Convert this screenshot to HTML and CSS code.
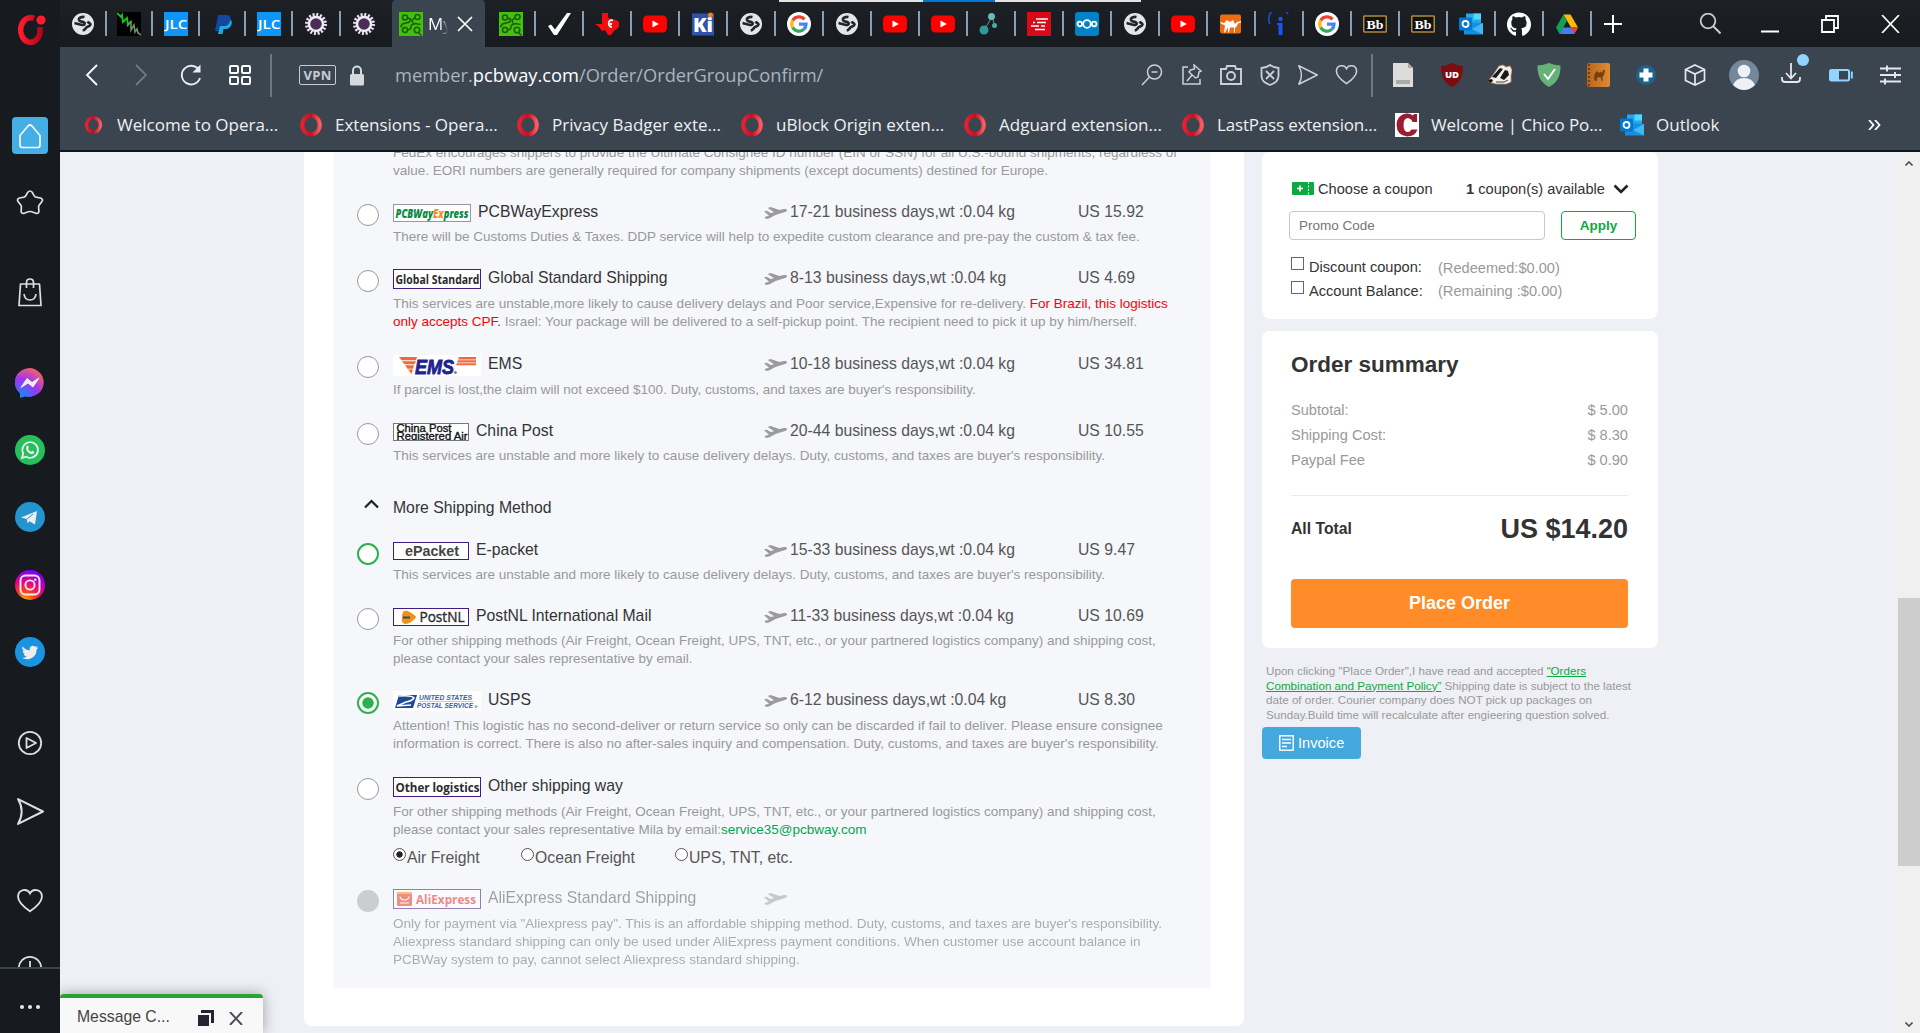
FILE: index.html
```html
<!DOCTYPE html>
<html lang="en">
<head>
<meta charset="utf-8">
<title>My Orders</title>
<link rel="stylesheet" href="styles.css">
</head>
<body>
<svg class="defs" width="0" height="0">
  <defs>
    <linearGradient id="opera" x1="0" y1="0" x2="1" y2="0"><stop offset="0" stop-color="#ff1b2d"/><stop offset="1" stop-color="#b50716"/></linearGradient>
    <linearGradient id="operaBm" x1="0" y1="0" x2="1" y2="0"><stop offset="0" stop-color="#e8202f"/><stop offset=".5" stop-color="#c01020"/><stop offset="1" stop-color="#ff5a5f"/></linearGradient>
    <radialGradient id="msg" cx=".2" cy="1" r="1.15"><stop offset="0" stop-color="#0a90ff"/><stop offset=".55" stop-color="#a033f0"/><stop offset="1" stop-color="#ff6a58"/></radialGradient>
    <radialGradient id="insta" cx=".3" cy="1.05" r="1.05"><stop offset="0" stop-color="#fb0"/><stop offset=".35" stop-color="#ff3a1f"/><stop offset=".65" stop-color="#e6008c"/><stop offset="1" stop-color="#7a00ff"/></radialGradient>
    <linearGradient id="camelBook" x1="0" y1="0" x2="1" y2="0"><stop offset="0" stop-color="#b8651b"/><stop offset="1" stop-color="#e08a34"/></linearGradient>
  </defs>
</svg>
<svg class="symbols">
  <symbol id="globe" viewBox="0 0 24 24"><circle cx="12" cy="12" r="11" fill="#e3e6ea"/><path d="M13.500 5c-3-.5-6 .8-5.500 3 .5 1.800 2.500 1.300 4.300 2 2 .9 1.500 2.300.5 2.800-2 .8-5-.8-9.300-1.800M16.500 9.500c1 1.500 3 1.500 3 3-.5 2-2.500 1.800-3.800 2.800-1.300 1-1.500 2.800-4 3.200" fill="none" stroke="#22262c" stroke-width="2.700"/></symbol>
  <symbol id="jlc" viewBox="0 0 24 24"><rect width="24" height="24" fill="#0d96f8"/><text x="1" y="17" font-family="Open Sans, sans-serif" font-size="13" font-weight="600" fill="#fff" textLength="22.500" lengthAdjust="spacingAndGlyphs">JLC</text></symbol>
  <symbol id="wave" viewBox="0 0 24 24"><rect width="24" height="24" fill="#000"/><path d="M0 1l4 4 1-2 1 7 4-4 1 7 3-4" fill="none" stroke="#0cc81a" stroke-width="1.800"/><path d="M10 14l4-4 0 8 3-5 1 7 2-3 1 4 3 2" fill="none" stroke="#6d9065" stroke-width="1.600"/></symbol>
  <symbol id="paypal" viewBox="0 0 24 24"><path d="M7 3h8c4 0 5.500 2.500 4.500 6-1 3.500-3.500 5-7 5H9.500L8.500 19H4z" fill="#1546a0"/><path d="M19.500 7.500c1.500 1.500 1.500 3 1 5-1 3.300-3.300 4.500-6 4.500h-2l-1 5H7l2-8h3.500c4 0 6-2 7-6.500z" fill="#20a8e8"/></symbol>
  <symbol id="gear" viewBox="0 0 24 24"><circle cx="12" cy="12" r="9.300" fill="#3a2148" stroke="#e8e2ee" stroke-width="3.400" stroke-dasharray="2 1.650"/><circle cx="12" cy="12" r="7" fill="#4a2e58" stroke="#f0edf3" stroke-width="2.400"/></symbol>
  <symbol id="pcb" viewBox="0 0 24 24"><rect width="24" height="24" fill="#42c209"/><g fill="none" stroke="#1f5c10" stroke-width="1.600"><circle cx="6" cy="5.500" r="2.500"/><circle cx="18.500" cy="5" r="2.500"/><circle cx="6" cy="18" r="2.500"/><circle cx="18" cy="18" r="2.700"/><path d="M8.500 6l3 1-1 3-7 2-2 3M16 5.500l-3 3 1 3M8.500 18l3-1 1-4 4-1.500 5 1M19.500 20.500l3 3"/></g></symbol>
  <symbol id="check" viewBox="0 0 24 24"><path d="M1 14l3-1.500 4 5L20 1h4L10 23H7z" fill="#fff"/></symbol>
  <symbol id="texas" viewBox="0 0 24 24"><path d="M7 1h6v5l8 2 3 2v5l-5 4-3 4h-3l-3-5-3 1-3-4-4-3h7z" fill="#f50d0d"/><path d="M18 8.500c-5-2.500-6 6.500-1 6.500M15 12h2" stroke="#fff" stroke-width="1.800" fill="none"/></symbol>
  <symbol id="yt" viewBox="0 0 24 24"><rect x="0" y="3.500" width="24" height="17" rx="4.500" fill="#f00"/><path d="M9.500 8.500v7l6.300-3.500z" fill="#fff"/></symbol>
  <symbol id="ki" viewBox="0 0 24 24"><rect x="1" y="1.500" width="22" height="22" fill="#3152ab"/><text x="2" y="20" font-family="Open Sans, sans-serif" font-size="20" font-weight="800" fill="#fff" textLength="20" lengthAdjust="spacingAndGlyphs">Ki</text><circle cx="19.500" cy="3" r="2.500" fill="#f38019"/></symbol>
  <symbol id="google" viewBox="0 0 24 24"><circle cx="12" cy="12" r="12" fill="#fff"/><g fill="none" stroke-width="3.200"><path d="M17.500 7.400A7.200 7.200 0 0 0 5.700 8.500" stroke="#ea4335"/><path d="M5.700 8.500a7.200 7.200 0 0 0 0 7" stroke="#fbbc05"/><path d="M5.700 15.500a7.200 7.200 0 0 0 10.900 2" stroke="#34a853"/><path d="M16.600 17.500c1.700-1.500 2.500-3.200 2.500-5.300H12" stroke="#4285f4"/></g></symbol>
  <symbol id="dots3" viewBox="0 0 24 24"><path d="M5 18L13 5l3 9" stroke="#4f9c99" fill="none"/><circle cx="5" cy="18" r="4.500" fill="#2f9a95"/><circle cx="12.500" cy="4.500" r="3.500" fill="#6cb9b5"/><circle cx="15.500" cy="13.500" r="2.500" fill="#4ba9a5"/></symbol>
  <symbol id="redlist" viewBox="0 0 24 24"><rect width="24" height="24" fill="#d90a18"/><path d="M9 7h12M6 10.500h2M10 10.500h9M4 14h8M14 14h4M8 17.500h10" stroke="#fff" stroke-width="1.600"/></symbol>
  <symbol id="nextcloud" viewBox="0 0 24 24"><rect width="24" height="24" rx="3" fill="#0082c9"/><g fill="none" stroke="#fff" stroke-width="1.800"><circle cx="12" cy="12" r="3.800"/><circle cx="4.800" cy="12" r="2.300"/><circle cx="19.200" cy="12" r="2.300"/></g></symbol>
  <symbol id="camel" viewBox="0 0 24 24"><rect x="1" y="2.500" width="21" height="19" rx="2" fill="#ee6c11"/><path d="M1 10l4 1 3-3 3 2 3-2 2 4 2-2 4-1v1.500l-3 1-2 4h-1v5h-1v-5l-4 0-1 5H9l0-5-3 5H5l1-7-4-2z" fill="#fff"/></symbol>
  <symbol id="info" viewBox="0 0 24 24"><path d="M3 12A10 10 0 0 1 21 2" fill="none" stroke="#1a4fe0" stroke-width="1.500"/><circle cx="13.500" cy="7" r="2.200" fill="#1a55f0"/><path d="M10 11h5.500v12h-4V13H10z" fill="#1a55f0"/></symbol>
  <symbol id="bb" viewBox="0 0 24 24"><rect x=".7" y="4" width="22.600" height="16" rx="1" fill="#111" stroke="#b08a3a" stroke-width="1.600"/><text x="3.500" y="16.500" font-family="Liberation Serif, serif" font-size="13" font-weight="700" fill="#fff" textLength="17" lengthAdjust="spacingAndGlyphs">Bb</text></symbol>
  <symbol id="outlook" viewBox="0 0 24 24"><rect x="7" y="1.500" width="15" height="12" fill="#28a8ea"/><rect x="14.500" y="1.500" width="7.500" height="6" fill="#50d9ff"/><path d="M5 10l19 1v11.500H5z" fill="#1490df"/><path d="M24 11v11.500L13 17z" fill="#42b9f2"/><rect x="0" y="5.500" width="13" height="13" rx="1" fill="#0078d4"/><circle cx="6.500" cy="12" r="3" fill="none" stroke="#fff" stroke-width="1.800"/></symbol>
  <symbol id="github" viewBox="0 0 24 24"><path fill="#fff" d="M12 .5C5.400.5 0 5.800 0 12.500c0 5.200 3.400 9.600 8 11.200.8 0 1-.5 1-1v-3c-3.500.7-4.200-1.500-4.200-1.500-.6-1.300-1.300-1.700-1.300-1.700-1-.7.1-.7.1-.7 1.200.1 1.900 1.200 1.900 1.200 1 1.800 2.800 1.300 3.500 1 .1-.8.400-1.300.8-1.600-3.500-.4-5.500-1.500-5.500-5.900 0-1.300.5-2.300 1.200-3.200-.1-.3-.5-1.500.1-3.100 0 0 1-.3 3.300 1.200a11.500 11.500 0 0 1 6 0C17.200 3.900 18.200 4.200 18.200 4.200c.7 1.600.3 2.800.2 3.100.7.900 1.200 1.900 1.200 3.200 0 4.400-2 5.500-5.500 5.900.5.400.9 1.200.9 2.300v4c0 .5.200 1 1 1 4.600-1.600 8-6 8-11.200C24 5.800 18.600.5 12 .5z"/></symbol>
  <symbol id="drive" viewBox="0 0 24 24"><path d="M8.500 2.500L1 15.500l3.500 6.500L12 9z" fill="#12a152"/><path d="M8.500 2.500h7L23 15.500h-7z" fill="#fbb90a"/><path d="M8 15.500h15l-3.800 6.500H4.500z" fill="#4280ee"/><path d="M16 15.500h7L19.200 22z" fill="#ea3f32"/></symbol>
  <symbol id="operaO" viewBox="0 0 24 24"><ellipse cx="12" cy="12" rx="8.700" ry="9.300" fill="none" stroke="url(#operaBm)" stroke-width="4.200"/></symbol>
  <symbol id="heart" viewBox="0 0 24 24"><path d="M12 21.500C7 18 1 13.500 1 8c0-7 8.500-8 11-3 2.500-5 11-4 11 3 0 5.500-6 10-11 13.500z" fill="none" stroke="currentColor" stroke-width="1.700"/></symbol>
  <symbol id="send" viewBox="0 0 26 26"><path d="M1 1l24 12L1 25q7-12 0-24z" fill="none" stroke="currentColor" stroke-width="1.900" stroke-linejoin="round"/></symbol>
  <symbol id="plane" viewBox="0 0 23 12"><path d="M0 4.200l2.600-.4 4 2.200 3.500-.8L3.700 1 6.500 0l9 3 4.500-1c2-.4 3 .2 3 1.300 0 .9-.8 1.400-2 1.800l-9.500 3L5.500 11.200l-3.500.9-1.500-2 4.500-1.300z" fill="#9b9b9b"/></symbol>
</svg>

<div class="browser">
  <aside class="sidebar">
    <svg class="s-logo" width="32" height="32" viewBox="0 0 32 32"><path d="M20 4.500A9.800 12.300 0 1 0 26 19V13" fill="none" stroke="url(#opera)" stroke-width="5.500"/><circle cx="27" cy="6" r="4.600" fill="#ff1b2d"/></svg>
    <div class="s-home"><svg width="24" height="26" viewBox="0 0 24 26"><path d="M2 12.500L10 3q2-2 4 0l8 9.500V22q0 2.500-2.500 2.500h-15Q2 24.500 2 22z" fill="none" stroke="#f2f8fc" stroke-width="1.700"/></svg></div>
    <svg class="s-star" width="28" height="28" viewBox="0 0 28 28"><path d="M11.800 3.300q2.200-2.600 4.400 0l2 3.500q.6 1 1.800 1.300l4.500.9q2.900.9 1.600 3.300l-3 3.900q-.6.900-.5 1.900l.3 4.200q-.3 2.600-3 2l-4.200-1.500q-1.700-.6-3.400 0L8.100 24.300q-2.700.6-3-2l.3-4.200q.1-1-.5-1.900l-3-3.900Q.6 9.900 3.500 9L8 8.100q1.200-.3 1.800-1.300z" fill="none" stroke="currentColor" stroke-width="1.700"/></svg>
    <svg class="s-bag" width="28" height="30" viewBox="0 0 28 30"><path d="M4.500 7h19l1.500 21.500H3zM10.500 11V5.500q0-3.500 3.500-3.500t3.500 3.500V11M8 17q.8 6 6 6t6-6" fill="none" stroke="currentColor" stroke-width="1.700" stroke-linejoin="round"/></svg>
    <svg class="s-msg" width="30" height="30" viewBox="0 0 30 30"><path d="M15 0a15 14.500 0 1 1-5 28.500L5 30V25.500A15 14.500 0 0 1 15 0z" fill="url(#msg)"/><path d="M6 19.500l6-9 5 4 7-4.500-6 9-5-4z" fill="#eee" stroke="#eee"/></svg>
    <svg class="s-wa" width="30" height="30" viewBox="0 0 30 30"><circle cx="15" cy="15" r="15" fill="#25c05c"/><path d="M7 23l1.200-4.500a7.800 7.800 0 1 1 3 3.200z" fill="none" stroke="#eee" stroke-width="1.700"/><path d="M11.500 11q1-1 1.800.2l.6 1.700-.8 1.200q1 2 3 2.700l1.200-1 1.900 1q.5 1.500-1.600 2.200c-3 .5-7-3.500-6.500-6.300z" fill="#eee"/></svg>
    <svg class="s-tg" width="30" height="30" viewBox="0 0 30 30"><circle cx="15" cy="15" r="15" fill="#2394cd"/><path d="M6 15.500L22 9l-2 13.500-5.500-3.300-2 2-.7-4.200z" fill="#eee"/><path d="M12 17l6-5" stroke="#2394cd"/></svg>
    <svg class="s-ig" width="30" height="30" viewBox="0 0 30 30"><circle cx="15" cy="15" r="15" fill="url(#insta)"/><g fill="none" stroke="#eee" stroke-width="1.900"><rect x="5.500" y="5.500" width="19" height="19" rx="5"/><circle cx="15" cy="15" r="4.600"/></g><circle cx="20.300" cy="9.700" r="1.200" fill="#eee"/></svg>
    <svg class="s-tw" width="30" height="30" viewBox="0 0 30 30"><circle cx="15" cy="15" r="15" fill="#1c93e0"/><path d="M7.500 9.500q3 3.600 7.300 3.700-.6-4 2.800-4.400 1.500 0 2.600 1l2.300-.6-1 1.700 2-.3-1.900 2c.2 6-4.600 9.800-9.600 9.600Q9 22.100 7 20.700q3 .2 4.700-1.300-2.400-.3-3.100-2.400h1.500q-2.500-1-2.500-3.500l1.500.4Q6.500 12 7.500 9.500z" fill="#eee"/></svg>
    <svg class="s-play" width="26" height="26" viewBox="0 0 26 26"><g fill="none" stroke="currentColor" stroke-width="1.800"><circle cx="13" cy="13" r="11.200"/><path d="M9.500 8v10l9.500-5z" stroke-linejoin="round"/></g></svg>
    <svg class="s-send" width="27" height="27"><use href="#send"/></svg>
    <svg class="s-heart" width="26" height="26"><use href="#heart"/></svg>
    <svg class="s-clock" width="26" height="12" viewBox="0 0 26 12"><circle cx="13" cy="13" r="11.200" fill="none" stroke="currentColor" stroke-width="1.800"/><path d="M13 6v7" stroke="currentColor" stroke-width="1.800"/></svg>
    <div class="s-more"><i></i><i></i><i></i></div>
  </aside>

  <div class="main">
    <header class="tabs">
      <div class="progress"><i></i></div>
      <div class="tab narrow"><svg><use href="#globe"/></svg></div><div class="tab narrow"><svg><use href="#wave"/></svg></div><div class="tab narrow"><svg><use href="#jlc"/></svg></div><div class="tab narrow"><svg><use href="#paypal"/></svg></div><div class="tab narrow"><svg><use href="#jlc"/></svg></div><div class="tab"><svg><use href="#gear"/></svg></div><div class="tab last"><svg><use href="#gear"/></svg></div>
      <div class="tab-active"><svg width="24" height="24"><use href="#pcb"/></svg><span class="tab-title">My</span><svg class="tab-x" width="16" height="16" viewBox="0 0 16 16"><path d="M1 1l14 14M15 1L1 15" stroke="#fff" stroke-width="1.700"/></svg></div>
      <div class="tab"><svg><use href="#pcb"/></svg></div><div class="tab"><svg><use href="#check"/></svg></div><div class="tab"><svg><use href="#texas"/></svg></div><div class="tab"><svg><use href="#yt"/></svg></div><div class="tab"><svg><use href="#ki"/></svg></div><div class="tab"><svg><use href="#globe"/></svg></div><div class="tab"><svg><use href="#google"/></svg></div><div class="tab"><svg><use href="#globe"/></svg></div><div class="tab"><svg><use href="#yt"/></svg></div><div class="tab"><svg><use href="#yt"/></svg></div><div class="tab"><svg><use href="#dots3"/></svg></div><div class="tab"><svg><use href="#redlist"/></svg></div><div class="tab"><svg><use href="#nextcloud"/></svg></div><div class="tab"><svg><use href="#globe"/></svg></div><div class="tab"><svg><use href="#yt"/></svg></div><div class="tab"><svg><use href="#camel"/></svg></div><div class="tab"><svg><use href="#info"/></svg></div><div class="tab"><svg><use href="#google"/></svg></div><div class="tab"><svg><use href="#bb"/></svg></div><div class="tab"><svg><use href="#bb"/></svg></div><div class="tab"><svg><use href="#outlook"/></svg></div><div class="tab"><svg><use href="#github"/></svg></div><div class="tab"><svg><use href="#drive"/></svg></div>
      <svg class="plus" width="18" height="18" viewBox="0 0 18 18"><path d="M9 0v18M0 9h18" stroke="#fff" stroke-width="2"/></svg>
      <div class="win">
        <svg width="22" height="22" viewBox="0 0 22 22"><circle cx="9" cy="8" r="7.300" fill="none" stroke="#c9cdd2" stroke-width="1.800"/><path d="M14 13l7.500 7.500" stroke="#c9cdd2" stroke-width="2"/></svg>
        <svg width="18" height="22" viewBox="0 0 18 22"><path d="M0 18.500h18" stroke="#fff" stroke-width="2"/></svg>
        <svg width="18" height="18" viewBox="0 0 18 18"><path d="M1 5h12v12H1zM5 5V1h12v12h-4" fill="none" stroke="#fff" stroke-width="1.800"/></svg>
        <svg width="19" height="18" viewBox="0 0 19 18"><path d="M1 0l17 18M18 0L1 18" stroke="#fff" stroke-width="1.700"/></svg>
      </div>
    </header>

    <div class="toolbar">
      <svg class="t-back" width="14" height="22" viewBox="0 0 14 22"><path d="M12 1L2 11l10 10" fill="none" stroke="#fff" stroke-width="1.800"/></svg>
      <svg class="t-fwd" width="14" height="22" viewBox="0 0 14 22"><path d="M2 1l10 10L2 21" fill="none" stroke="#6f7985" stroke-width="1.800"/></svg>
      <svg class="t-reload" width="22" height="22" viewBox="0 0 22 22"><path d="M19.500 7A9.300 9.300 0 1 0 20 14" fill="none" stroke="#e9ecef" stroke-width="1.900"/><path d="M20.500.5v8h-8z" fill="#e9ecef"/></svg>
      <svg class="t-grid" width="22" height="20" viewBox="0 0 22 20"><g fill="none" stroke="#fff" stroke-width="1.900"><rect x="1" y="1" width="8" height="7" rx="1"/><rect x="13" y="1" width="8" height="7" rx="1"/><rect x="1" y="12" width="8" height="7" rx="1"/><rect x="13" y="12" width="8" height="7" rx="1"/></g></svg>
      <i class="t-div"></i>
      <span class="vpn">VPN</span>
      <svg class="lock" width="16" height="21" viewBox="0 0 16 21"><rect x="1" y="9" width="14" height="11.500" rx="1.500" fill="#d5d9dd"/><path d="M4 9V5.500a4 4 0 0 1 8 0V9" fill="none" stroke="#d5d9dd" stroke-width="2"/></svg>
      <span class="url">member.<b>pcbway.com</b>/Order/OrderGroupConfirm/</span>
      <div class="addr">
        <svg width="22" height="22" viewBox="0 0 22 22"><g fill="none" stroke="#ccd1d6" stroke-width="1.500"><circle cx="13.500" cy="8" r="7"/><path d="M8.500 13L1 21M10.500 8h6"/></g></svg>
        <svg width="22" height="22" viewBox="0 0 22 22"><path d="M7 3H2v17h17v-5M13 1l7 6-2 1-1 5-2.500 1L8 8l1.500-2 4-1zM11 11l-5 6" fill="none" stroke="#ccd1d6" stroke-width="1.500"/></svg>
        <svg width="22" height="22" viewBox="0 0 22 22"><g fill="none" stroke="#ccd1d6" stroke-width="1.900"><path d="M1 5h5l1-3h8l1 3h5v15H1z"/><circle cx="11" cy="12" r="4"/></g></svg>
        <svg width="20" height="22" viewBox="0 0 20 22"><path d="M10 1q4 3 8.500 3v8q0 6-8.500 9Q1.500 18 1.500 12V4Q6 4 10 1z" fill="none" stroke="#ccd1d6" stroke-width="1.800"/><path d="M6 7l8 8M14 7l-8 8" stroke="#ccd1d6" stroke-width="1.800"/></svg>
        <svg class="dim" width="20" height="20"><use href="#send"/></svg>
        <svg class="dim" width="23" height="22"><use href="#heart"/></svg>
      </div>
      <i class="t-div"></i>
      <div class="exts">
        <svg viewBox="0 0 24 24"><path d="M2 0h15l5 5v19H2z" fill="#dcdcda"/><path d="M17 0v5h5z" fill="#aaa"/><rect x="5" y="17" width="14" height="4" fill="#a9a9a9"/></svg>
        <svg viewBox="0 0 24 24"><path d="M12 0q5 3 11 3 0 16-11 21Q1 19 1 3q6 0 11-3z" fill="#800b0f"/><text x="5" y="14.500" font-family="Open Sans, sans-serif" font-size="9.500" font-weight="800" fill="#fff" textLength="14">UD</text></svg>
        <svg viewBox="0 0 24 24"><path d="M1 17l4-5 6-9 4-1 3 2 4-1 2 4-1 5v7l-5 2H8l-7-2z" fill="#f2efec" stroke="#c98a52" stroke-width=".8"/><path d="M4 14l8-9 3 1-7 9zM12 15l5-8 3 1 1 4-5 5z" fill="#191919"/><path d="M0 17l4-1 1 2-3 2z" fill="#111"/><path d="M8 19h8l4-2" stroke="#444" fill="none"/></svg>
        <svg viewBox="0 0 24 24"><path d="M12 0q5 2 11.500 2.500Q24 18 12 24 0 18 .5 2.500 7 2 12 0z" fill="#67b279"/><path d="M7 11l4 5 7-10" fill="none" stroke="#fff" stroke-width="1.900"/></svg>
        <svg viewBox="0 0 24 24"><rect x="1" width="23" height="24" rx="2" fill="url(#camelBook)"/><path d="M3 1v22" stroke="#5d3009" stroke-width="1.500" stroke-dasharray="2 2"/><path d="M8 16l.5-5 2.500-3 2 2 1.500-1.500L16 10l1-3h2l-1 5-1.500 2v4h-1l-1-4-3 .5-1 3.500H9z" fill="#75400f"/></svg>
        <svg viewBox="0 0 24 24"><circle cx="12" cy="12" r="10" fill="#1c648c"/><path d="M9.500 5.500h5v4h4v5h-4v4h-5v-4h-4v-5h4z" fill="#fff"/></svg>
        <svg viewBox="0 0 24 24"><path d="M12 2l9.500 4.500v11L12 22l-9.500-4.500v-11zM2.500 6.500L12 11l9.500-4.500M12 11v11" fill="none" stroke="#e5e8eb" stroke-width="1.700"/></svg>
        <svg class="avatar" viewBox="0 0 30 30"><circle cx="15" cy="15" r="15" fill="#74889c"/><circle cx="15" cy="11" r="6.300" fill="#eef2f6"/><path d="M4 25q3-7 11-7t11 7q-5 5-11 5T4 25z" fill="#eef2f6"/></svg>
        <svg class="dl" viewBox="0 0 24 34"><path d="M10 10v15M5 20l5 5.500 5-5.500M1 24v2q0 3 3 3h12q3 0 3-3v-2" fill="none" stroke="#e5e8eb" stroke-width="1.800"/><circle cx="22" cy="7" r="6" fill="#90d5ff"/></svg>
        <svg viewBox="0 0 24 24"><rect x="1" y="7" width="19" height="10.500" rx="1.500" fill="none" stroke="#90d5ff" stroke-width="2"/><rect x="2" y="8" width="8" height="9" fill="#90d5ff"/><path d="M22.800 8.500v7" stroke="#90d5ff" stroke-width="2"/></svg>
        <svg viewBox="0 0 24 24"><path d="M2 5.500h21M2 12h21M2 18.500h21" stroke="#e5e8eb" stroke-width="1.900"/><path d="M9 2.500v6M17 9v6M7 15.500v6" stroke="#e5e8eb" stroke-width="1.900"/></svg>
      </div>
    </div>

    <nav class="bookmarks">
      <span class="b b1"><svg><use href="#operaO"/></svg>Welcome to Opera...</span>
      <span class="b b2"><svg><use href="#operaO"/></svg>Extensions - Opera...</span>
      <span class="b b3"><svg><use href="#operaO"/></svg>Privacy Badger exte...</span>
      <span class="b b4"><svg><use href="#operaO"/></svg>uBlock Origin exten...</span>
      <span class="b b5"><svg><use href="#operaO"/></svg>Adguard extension...</span>
      <span class="b b6"><svg><use href="#operaO"/></svg>LastPass extension...</span>
      <span class="b b7"><svg viewBox="0 0 24 24"><rect width="24" height="24" fill="#fff"/><path d="M22 9V1h-3l-1 1.500Q15 0 11 .5 2 2 1.500 12 2 22.500 12 23.500q8 0 10.500-7h-6q-1.500 2.500-4 2.500-4-.5-4-7 0-6.500 4-7 4 .5 5 4z" fill="#9b1b30"/></svg>Welcome | Chico Po...</span>
      <span class="b b8"><svg><use href="#outlook"/></svg>Outlook</span>
      <svg class="more" width="13" height="10" viewBox="0 0 13 10"><path d="M1 0l4.500 5L1 10M7 0l4.500 5L7 10" fill="none" stroke="#fff" stroke-width="1.800"/></svg>
    </nav>

    <div class="viewport">
      <main class="card">
        <section class="panel">
          <p class="desc first">FedEx encourages shippers to provide the Ultimate Consignee ID number (EIN or SSN) for all U.S.-bound shipments, regardless of<br>value. EORI numbers are generally required for company shipments (except documents) destined for Europe.</p>

          <div class="ship">
            <i class="radio"></i>
            <div class="head"><span class="logo l-pcb"><svg width="76" height="16"><text x="1.500" y="12.500" textLength="73" lengthAdjust="spacingAndGlyphs">PCBWay<tspan class="or">Ex</tspan>press</text></svg></span><span class="name">PCBWayExpress</span></div>
            <span class="days"><svg><use href="#plane"/></svg>17-21 business days,wt :0.04 kg</span><span class="price">US 15.92</span>
            <p class="desc">There will be Customs Duties &amp; Taxes. DDP service will help to expedite custom clearance and pre-pay the custom &amp; tax fee.</p>
          </div>
          <div class="ship tall">
            <i class="radio"></i>
            <div class="head"><span class="logo wide"><svg width="86" height="18"><text x="1.500" y="13.500" textLength="84" lengthAdjust="spacingAndGlyphs">Global Standard</text></svg></span><span class="name">Global Standard Shipping</span></div>
            <span class="days"><svg><use href="#plane"/></svg>8-13 business days,wt :0.04 kg</span><span class="price">US 4.69</span>
            <p class="desc">This services are unstable,more likely to cause delivery delays and Poor service,Expensive for re-delivery. <em>For Brazil, this logistics</em><br><em>only accepts CPF.</em> Israel: Your package will be delivered to a self-pickup point. The recipient need to pick it up by him/herself.</p>
          </div>
          <div class="ship tall">
            <i class="radio"></i>
            <div class="head"><span class="logo plain"><svg width="88" height="21"><path d="M6 2h18l-1 3.200H8.500zM9 6.200h14l-1.500 3H11.500zM12 10.200h9l-1 3.500h-5.500zM15 14.500h5L18.500 19z" fill="#ee6a3c"/><path d="M66 2h17v2.600H65zM65 5.300h18v2.200H64zM64 8.300h19v1.900H63z" fill="#ee6a3c"/><text x="22" y="18.500" class="ems" textLength="39" lengthAdjust="spacingAndGlyphs">EMS</text><circle cx="62.500" cy="17.500" r="1.300" fill="#667"/></svg></span><span class="name">EMS</span></div>
            <span class="days"><svg><use href="#plane"/></svg>10-18 business days,wt :0.04 kg</span><span class="price">US 34.81</span>
            <p class="desc">If parcel is lost,the claim will not exceed $100. Duty, customs, and taxes are buyer's responsibility.</p>
          </div>
          <div class="ship">
            <i class="radio"></i>
            <div class="head"><span class="logo l-china"><svg width="74" height="16"><text x="2.500" y="8" textLength="55" lengthAdjust="spacingAndGlyphs">China Post</text><text x="2.500" y="16" textLength="71" lengthAdjust="spacingAndGlyphs">Registered Air</text></svg></span><span class="name">China Post</span></div>
            <span class="days"><svg><use href="#plane"/></svg>20-44 business days,wt :0.04 kg</span><span class="price">US 10.55</span>
            <p class="desc">This services are unstable and more likely to cause delivery delays. Duty, customs, and taxes are buyer's responsibility.</p>
          </div>

          <div class="more-row"><svg width="15" height="10" viewBox="0 0 15 10"><path d="M1 8.500L7.500 2 14 8.500" fill="none" stroke="#222" stroke-width="2.200"/></svg><span>More Shipping Method</span></div>

          <div class="ship">
            <i class="radio hover"></i>
            <div class="head"><span class="logo l-ep"><svg width="74" height="16"><text x="11" y="13" textLength="54" lengthAdjust="spacingAndGlyphs">ePacket</text></svg></span><span class="name">E-packet</span></div>
            <span class="days"><svg><use href="#plane"/></svg>15-33 business days,wt :0.04 kg</span><span class="price">US 9.47</span>
            <p class="desc">This services are unstable and more likely to cause delivery delays. Duty, customs, and taxes are buyer's responsibility.</p>
          </div>
          <div class="ship">
            <i class="radio"></i>
            <div class="head"><span class="logo l-nl"><svg width="74" height="16"><path d="M10 2q4-1.500 12 5.500 0 2-2 3-5 4.500-9 4.500-4-1-3-6.500 0-5 2-6.500z" fill="#f29111"/><path d="M9 8.500h7" stroke="#26468f" stroke-width="2"/><text x="25.500" y="13" textLength="45" lengthAdjust="spacingAndGlyphs">PostNL</text></svg></span><span class="name">PostNL International Mail</span></div>
            <span class="days"><svg><use href="#plane"/></svg>11-33 business days,wt :0.04 kg</span><span class="price">US 10.69</span>
            <p class="desc">For other shipping methods (Air Freight, Ocean Freight, UPS, TNT, etc., or your partnered logistics company) and shipping cost,<br>please contact your sales representative by email.</p>
          </div>
          <div class="ship tall">
            <i class="radio on"></i>
            <div class="head"><span class="logo plain"><svg width="88" height="20"><path d="M6 4h18l-4 13H2z" fill="#1c4a95"/><path d="M6 5q13-1 15 2-2 3-8 4L4 15l14-1" fill="none" stroke="#fff" stroke-width="1.500"/><text x="26" y="9" class="usps" textLength="53" lengthAdjust="spacingAndGlyphs">UNITED STATES</text><text x="24" y="17" class="usps" textLength="56" lengthAdjust="spacingAndGlyphs">POSTAL SERVICE</text><path d="M26 10.500h54" stroke="#e9aab0" stroke-width=".8"/><circle cx="83" cy="15.500" r="1.500" fill="#9db0d4"/></svg></span><span class="name">USPS</span></div>
            <span class="days"><svg><use href="#plane"/></svg>6-12 business days,wt :0.04 kg</span><span class="price">US 8.30</span>
            <p class="desc">Attention! This logistic has no second-deliver or return service so only can be discarded if fail to deliver. Please ensure consignee<br>information is correct. There is also no after-sales inquiry and compensation. Duty, customs, and taxes are buyer's responsibility.</p>
          </div>
          <div class="ship tall">
            <i class="radio"></i>
            <div class="head"><span class="logo wide"><svg width="86" height="18"><text x="1.500" y="13.500" textLength="84" lengthAdjust="spacingAndGlyphs">Other logistics</text></svg></span><span class="name">Other shipping way</span></div>
            <p class="desc">For other shipping methods (Air Freight, Ocean Freight, UPS, TNT, etc., or your partnered logistics company) and shipping cost,<br>please contact your sales representative Mila by email:<a>service35@pcbway.com</a></p>
            <div class="freight"><span class="f1"><i class="mini on"></i>Air Freight</span><span class="f2"><i class="mini"></i>Ocean Freight</span><span><i class="mini"></i>UPS, TNT, etc.</span></div>
          </div>
          <div class="ship tall off">
            <i class="radio grey"></i>
            <div class="head"><span class="logo wide l-ali"><svg width="86" height="18"><rect x="3" y="2" width="15" height="14" rx="1" fill="#e73c1e"/><path d="M3 4V3q0-1 1-1h13q1 0 1 1v1z" fill="#f7941d"/><path d="M6 6.500q.5 3.500 4.500 3.500T15 6.500M6 13h9" fill="none" stroke="#fff" stroke-width="1.200"/><text x="22" y="13.500" textLength="60" lengthAdjust="spacingAndGlyphs">AliExpress</text></svg></span><span class="name">AliExpress Standard Shipping</span></div>
            <span class="days"><svg><use href="#plane"/></svg></span>
            <p class="desc">Only for payment via "Aliexpress pay". This is an affordable shipping method. Duty, customs, and taxes are buyer's responsibility.<br>Aliexpress standard shipping can only be used under AliExpress payment conditions. When customer use account balance in<br>PCBWay system to pay, cannot select Aliexpress standard shipping.</p>
          </div>
        </section>
      </main>

      <aside class="side">
        <section class="coupon">
          <div class="c-row"><svg width="22" height="13" viewBox="0 0 22 13"><rect width="22" height="13" rx="1" fill="#0caa41"/><path d="M5 6.500h6M8 3.500v6" stroke="#fff" stroke-width="1.600"/><path d="M16.500 0v13" stroke="#fff" stroke-dasharray="2 1.500"/></svg><span class="c-label">Choose a coupon</span><span><b>1</b> coupon(s) available</span><svg class="c-down" width="16" height="10" viewBox="0 0 16 10"><path d="M1.500 1.500L8 8l6.500-6.500" fill="none" stroke="#222" stroke-width="2.600"/></svg></div>
          <div class="p-row"><div class="promo">Promo Code</div><div class="apply">Apply</div></div>
          <div class="k-row"><i class="box"></i><span class="k">Discount coupon:</span><span class="v low">(Redeemed:$0.00)</span></div>
          <div class="k-row"><i class="box"></i><span class="k">Account Balance:</span><span class="v">(Remaining :$0.00)</span></div>
        </section>
        <section class="summary">
          <h2>Order summary</h2>
          <div class="line"><span>Subtotal:</span><span>$ 5.00</span></div>
          <div class="line"><span>Shipping Cost:</span><span>$ 8.30</span></div>
          <div class="line"><span>Paypal Fee</span><span>$ 0.90</span></div>
          <div class="total"><span>All Total</span><strong>US $14.20</strong></div>
          <div class="place">Place Order</div>
        </section>
        <p class="terms">Upon clicking "Place Order",I have read and accepted <a>“Orders<br>Combination and Payment Policy”</a> Shipping date is subject to the latest<br>date of order. Courier company does NOT pick up packages on<br>Sunday.Build time will recalculate after engieering question solved.</p>
        <div class="invoice"><svg width="15" height="16" viewBox="0 0 15 16"><rect x=".8" y=".8" width="13.400" height="14.400" fill="none" stroke="#fff" stroke-width="1.400"/><path d="M3 4.500h9M3 8h9M3 11.500h5" stroke="#fff" stroke-width="1.400"/></svg>Invoice</div>
      </aside>

      <div class="scroll"><svg width="8" height="5" viewBox="0 0 8 5"><path d="M.5 4.500L4 1l3.500 3.500" fill="none" stroke="#505050" stroke-width="1.600"/></svg><i></i><svg width="8" height="5" viewBox="0 0 8 5"><path d="M.5.5L4 4 7.500.5" fill="none" stroke="#505050" stroke-width="1.600"/></svg></div>

      <div class="chat"><span>Message C...</span><svg width="16" height="16" viewBox="0 0 16 16"><path d="M0 5h11v11H0z" fill="#252434"/><path d="M3 1.500h11.500V13" fill="none" stroke="#252434" stroke-width="3"/></svg><svg width="14" height="13" viewBox="0 0 14 13"><path d="M1 0l12 13M13 0L1 13" stroke="#4b4b58" stroke-width="1.900"/></svg></div>
    </div>
  </div>
</div>
</body>
</html>
```

FILE: styles.css
```css
* { box-sizing: border-box; }
body { margin: 0; overflow: hidden; font-family: "Liberation Sans", Arial, sans-serif; }
p, h2 { margin: 0; }
i, em { font-style: normal; }
svg { display: block; flex: none; }
.defs { position: absolute; }
.symbols { display: none; }

.browser { display: flex; width: 1920px; height: 1033px; background: #171a1f; }
.main { display: flex; flex-direction: column; width: 1860px; }

/* Sidebar */
.sidebar { display: flex; flex-direction: column; align-items: center; width: 60px; flex: none; color: #dbe0e6; }
.s-logo { margin-top: 14px; }
.s-home { display: flex; align-items: center; justify-content: center; width: 36px; height: 37px; margin-top: 71px; border-radius: 4px; background: #45aee5; }
.s-star { margin-top: 35px; }
.s-bag { margin-top: 60px; }
.s-msg { margin-top: 61px; }
.s-wa { margin-top: 37px; }
.s-tg, .s-tw { margin-top: 37px; }
.s-ig { margin-top: 38px; }
.s-play { margin-top: 63px; }
.s-send { margin-top: 42px; }
.s-heart { margin-top: 63px; }
.s-clock { margin-top: 41px; }
.s-more { display: flex; gap: 4px; justify-content: center; width: 60px; border-top: 2px solid #3b4550; padding-top: 36px; }
.s-more i { width: 4px; height: 4px; border-radius: 50%; background: #e4e8ec; }

/* Tab strip */
.tabs { position: relative; display: flex; align-items: center; height: 47px; flex: none; background: linear-gradient(#1d2025, #171a1f); }
.progress { position: absolute; top: 0; left: 719px; width: 362px; height: 2px; background: #e4e4e4; }
.progress i { display: block; width: 72px; height: 2px; margin-left: 144px; background: #0078d7; }
.tab { display: flex; align-items: center; justify-content: center; width: 48px; height: 25px; padding-left: 1px; flex: none; border-right: 2px solid #8c9db0; }
.tab.narrow { width: 46.6px; }
.tab.last { border-color: transparent; }
.tab svg { width: 24px; height: 24px; }
.tab-active { display: flex; align-items: center; width: 93px; height: 47px; margin: 0 3px; padding-left: 7px; border-radius: 4px 4px 0 0; background: #3b4550; }
.tab-title { width: 20px; margin-left: 5px; overflow: hidden; font: 17px "Open Sans", sans-serif; color: #fff; -webkit-mask: linear-gradient(90deg, #000 60%, transparent); mask: linear-gradient(90deg, #000 60%, transparent); }
.tab-x { margin-left: 9px; }
.plus { margin-left: 12px; }
.win { display: flex; align-items: center; margin-left: 77px; }
.win svg + svg { margin-left: 40px; }
.win svg:nth-child(n+3) { margin-left: 42px; }

/* Address bar */
.toolbar { display: flex; align-items: center; height: 55px; padding-top: 1px; flex: none; background: #3b4550; }
.t-back { margin-left: 25px; }
.t-fwd { margin-left: 35px; }
.t-reload { margin-left: 32px; }
.t-grid { margin-left: 27px; }
.t-div { width: 2px; height: 43px; background: #6d7781; }
.t-grid + .t-div { margin-left: 19px; }
.vpn { width: 37px; height: 20px; margin-left: 27px; border: 1.500px solid #c8ccd1; border-radius: 2px; font: 700 13px/18px "Open Sans", sans-serif; letter-spacing: .3px; text-align: center; color: #c8ccd1; }
.lock { margin-left: 13px; }
.url { width: 720px; flex: none; margin-left: 30px; font: 18.300px/24px "Open Sans", sans-serif; color: #a9b3be; white-space: nowrap; }
.url b { font-weight: 400; color: #fff; }
.addr { display: flex; align-items: center; gap: 17.700px; width: 230px; flex: none; margin-left: 26px; }
.dim { color: #ccd1d6; }
.exts { display: flex; align-items: center; gap: 24.700px; margin-left: 18px; }
.exts svg { width: 24px; height: 24px; }
.exts .avatar { width: 30px; height: 30px; margin: 0 -3px; }
.exts .dl { height: 34px; overflow: visible; margin: -10px 0 0; }

/* Bookmarks */
.bookmarks { display: flex; align-items: center; height: 50px; padding-bottom: 2px; flex: none; border-bottom: 2px solid #11161b; background: #3b4550; font: 17px/24px "Open Sans", sans-serif; color: #eef0f2; }
.b { display: flex; align-items: center; flex: none; white-space: nowrap; }
.b svg { width: 24px; height: 24px; margin-right: 12px; }
.b1 { width: 218px; padding-left: 24px; }
.b1 svg { width: 19px; margin-right: 14px; }
.b2 { width: 217px; padding-left: 21px; }
.b3 { width: 224px; padding-left: 21px; }
.b4 { width: 223px; padding-left: 21px; }
.b5 { width: 218px; padding-left: 21px; }
.b6 { width: 235px; padding-left: 21px; letter-spacing: -.18px; }
.b7 { width: 225px; letter-spacing: -.1px; }
.b8 { width: 239px; }
.more { margin-left: 9px; }

/* Page */
.viewport { position: relative; display: flex; flex: 1; min-height: 0; overflow: hidden; background: #eff0f5; }
.card { width: 940px; height: 874px; margin-left: 244px; flex: none; border-radius: 0 0 8px 8px; background: #fff; overflow: hidden; }
.panel { width: 878px; height: 844px; margin-left: 29px; padding-left: 24px; background: #f5f7fb; }
.desc { font-size: 13.500px; line-height: 18px; color: #999; white-space: nowrap; }
.desc em { color: #f00; }
.desc a { color: #00a651; }
.desc.first { margin: -8px 0 20px 36px; }
.ship { display: grid; grid-template-columns: 36px 371px 314px auto; grid-template-rows: 27.500px auto; padding-bottom: 20.500px; }
.ship.tall { grid-template-rows: 29px auto; }
.radio { width: 22px; height: 22px; margin-top: 4px; border: 1px solid #999; border-radius: 50%; background: #fff; }
.radio.hover { margin-top: 5px; border: 2px solid #2bb24c; }
.radio.on { border: 2px solid #2bb24c; background: radial-gradient(circle, #2bb24c 5.300px, #fff 6px); }
.radio.grey { border: 0; background: #a3a3a3; }
.head { display: flex; align-items: flex-start; }
.name { margin-left: 7px; font-size: 15.750px; line-height: 24px; color: #333; white-space: nowrap; }
.logo { margin-top: 4px; border: 1px solid #401c84; background: #fff; overflow: hidden; }
.tall .logo { margin-top: 3px; }
.logo text { font: 700 13px "Open Sans", sans-serif; fill: #2b2b2b; }
.logo.plain { border: 0; }
.logo.l-pcb { border-color: #999; }
.l-pcb text { font: italic 800 12px "Open Sans", sans-serif; fill: #0a8a43; }
.l-pcb .or { fill: #ff8a1c; }
.logo text.ems { font: italic 700 21px "Liberation Sans", sans-serif; fill: #1f2391; stroke: #1f2391; stroke-width: .9; }
.logo text.usps { font: italic 700 8px "Liberation Sans", sans-serif; fill: #3d62a5; }
.logo.l-china { border-color: #777; }
.l-china text { font: 10.500px "Liberation Sans", sans-serif; fill: #111; stroke: #111; stroke-width: .35; }
.l-ep text { font: 700 14px "Liberation Sans", sans-serif; fill: #444; }
.l-nl text { font: 14px "Open Sans", sans-serif; stroke: #333; stroke-width: .4; }
.l-ali text { fill: #e62e2e; }
.days { display: flex; align-items: flex-start; font-size: 15.750px; line-height: 24px; color: #555; white-space: nowrap; }
.days svg { width: 23px; height: 12px; margin: 7px 3px 0 0; }
.price { font-size: 15.750px; line-height: 24px; color: #555; }
.ship .desc { grid-column: 2 / 5; grid-row: 2; }
.ship.off > * { opacity: .5; }
.ship.off .desc { opacity: .8; }
.ship.off .name { opacity: .8; }
.ship.off .head { opacity: .55; }
.more-row { display: flex; align-items: flex-start; gap: 14px; height: 53px; padding: 11px 0 0 7px; font-size: 15.750px; line-height: 24px; color: #333; }
.more-row svg { margin-top: 3px; }
.freight { grid-column: 2 / 5; grid-row: 3; display: flex; height: 27px; padding-top: 7.500px; font-size: 15.750px; line-height: 24px; color: #555; }
.freight span { display: flex; }
.f1 { width: 128px; }
.f2 { width: 154px; }
.mini { width: 13px; height: 13px; margin: 2px 1px 0 0; border: 1.500px solid #555; border-radius: 50%; background: #fff; }
.mini.on { background: radial-gradient(circle, #222 2.800px, #fff 3.500px); }
.ship:has(.freight) { padding-bottom: 20.500px; }

/* Right column */
.side { width: 396px; margin-left: 18px; flex: none; }
.coupon { height: 167px; padding: 30px 0 0 27px; border-radius: 8px; background: #fff; font-size: 14.625px; line-height: 24px; color: #333; }
.c-row { display: flex; align-items: flex-start; height: 29px; padding-left: 3px; }
.c-row span { margin-top: -2px; line-height: 19px; white-space: nowrap; }
.c-row .c-label { width: 148px; margin-left: 4px; }
.c-row .c-down { margin: 2px 0 0 8px; }
.p-row { display: flex; gap: 16px; }
.promo { width: 256px; height: 29px; padding-left: 9px; border: 1px solid #c8c8c8; border-radius: 4px; font-size: 13.500px; line-height: 27px; color: #757575; }
.apply { width: 75px; height: 29px; border: 1px solid #0caa41; border-radius: 4px; font-size: 13.500px; font-weight: 700; line-height: 27px; text-align: center; color: #0caa41; }
.k-row { display: flex; height: 24px; padding-left: 2px; }
.p-row + .k-row { margin-top: 15px; }
.box { width: 13px; height: 13px; margin-top: 2px; border: 1px solid #666; background: #fff; }
.k { width: 129px; margin-left: 5px; }
.v { color: #999; }
.v.low { padding-top: 1px; }
.summary { height: 317px; margin-top: 12px; padding: 20px 30px 0 29px; border-radius: 8px; background: #fff; color: #333; }
.summary h2 { height: 52px; font-size: 22.500px; line-height: 27px; }
.line { display: flex; justify-content: space-between; height: 25px; font-size: 14.625px; color: #999; line-height: 14px; }
.total { display: flex; justify-content: space-between; align-items: center; height: 84px; margin-top: 17px; padding-bottom: 17px; border-top: 1px solid #ebebeb; font-size: 15.750px; font-weight: 700; }
.total strong { font-size: 27px; }
.place { height: 49px; border-radius: 4px; background: #ff8c28; font-size: 18px; font-weight: 700; line-height: 48px; text-align: center; color: #fff; }
.terms { margin: 16px 0 0 4px; font-size: 11.650px; line-height: 14.600px; color: #999; white-space: nowrap; }
.terms a { color: #0caa41; text-decoration: underline; }
.invoice { display: flex; align-items: center; gap: 4px; width: 99px; height: 32px; margin-top: 5px; padding-left: 17px; border-radius: 4px; background: #44a8de; font-size: 14.625px; color: #fff; }
.scroll { display: flex; flex-direction: column; align-items: center; width: 22px; margin-left: auto; padding: 9px 0 6px; background: #f0f0f0; }
.scroll i { width: 22px; height: 268px; margin: 432px 0 auto; background: #cdcdcd; }
.chat { position: absolute; left: 0; bottom: 0; display: flex; align-items: flex-start; width: 203px; height: 39px; padding: 9px 0 0 17px; border-top: 4px solid #26a336; border-radius: 4px 4px 0 0; background: #f8f8f8; box-shadow: 0 0 14px rgba(0, 0, 0, .35); font-size: 15.750px; line-height: 20px; color: #444; }
.chat span { width: 121px; }
.chat svg { margin-top: 3px; }
.chat svg + svg { margin: 5px 0 0 15px; }
```
